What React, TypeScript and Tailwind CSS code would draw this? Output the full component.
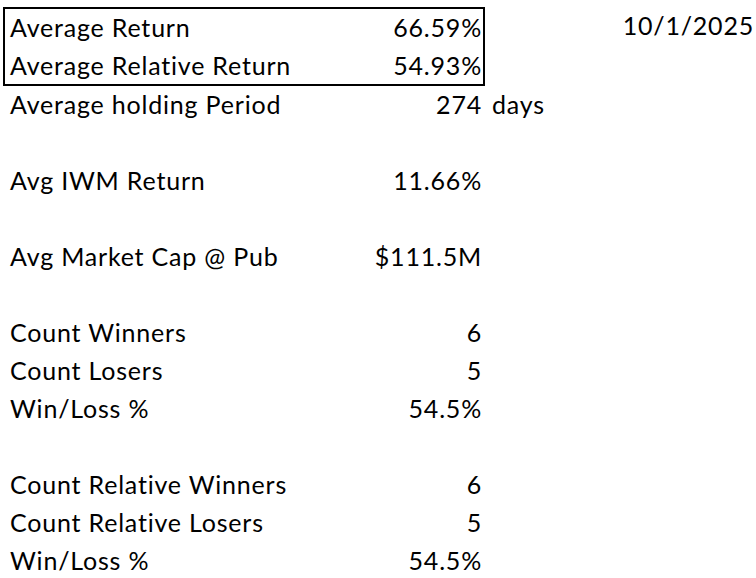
const rows: { label: string; value: string; extra?: string }[] = [
  { label: 'Average holding Period', value: '274', extra: 'days' },
  { label: '', value: '' },
  { label: 'Avg IWM Return', value: '11.66%' },
  { label: '', value: '' },
  { label: 'Avg Market Cap @ Pub', value: '$111.5M' },
  { label: '', value: '' },
  { label: 'Count Winners', value: '6' },
  { label: 'Count Losers', value: '5' },
  { label: 'Win/Loss %', value: '54.5%' },
  { label: '', value: '' },
  { label: 'Count Relative Winners', value: '6' },
  { label: 'Count Relative Losers', value: '5' },
  { label: 'Win/Loss %', value: '54.5%' },
]

function Row({ label, value, extra }: { label: string; value: string; extra?: string }) {
  return (
    <div className="flex h-[38px] items-center">
      <div className="w-[482px] flex justify-between pl-[7px] pr-[3px]">
        <span>{label}</span>
        <span>{value}</span>
      </div>
      {extra && <span className="pl-[7px]">{extra}</span>}
    </div>
  )
}

export default function App() {
  return (
    <div
      className="w-[756px] h-[578px] bg-white text-black text-[25px] tracking-[0.8px] overflow-hidden pl-[3px] pt-[7px]"
      style={{ fontFamily: 'Lato, "Liberation Sans", sans-serif' }}
    >
      <div className="flex">
        <div className="w-[482px] border-2 border-black">
          <div className="flex h-[38px] items-center justify-between pl-[5px] pr-[1px]">
            <span>Average Return</span>
            <span>66.59%</span>
          </div>
          <div className="flex h-[37px] items-center justify-between pl-[5px] pr-[1px]">
            <span>Average Relative Return</span>
            <span>54.93%</span>
          </div>
        </div>
        <div className="flex-1 flex h-[38px] items-center justify-end pr-[2px]">
          <span>10/1/2025</span>
        </div>
      </div>
      {rows.map((r, i) => (
        <Row key={i} {...r} />
      ))}
    </div>
  )
}
